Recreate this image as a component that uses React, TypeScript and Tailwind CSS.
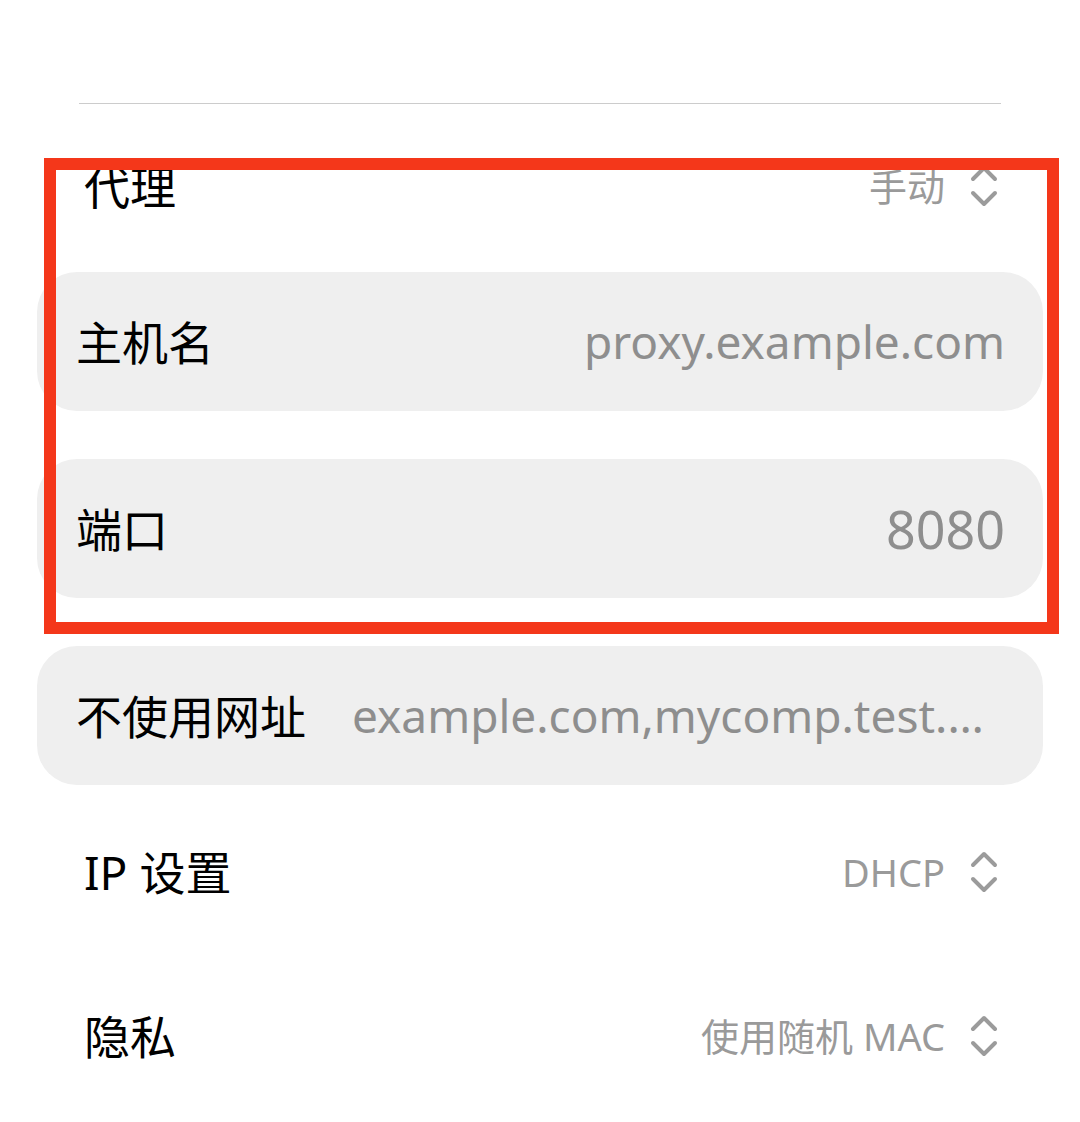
import React from "react";

const FONT = {
  fontFamily: '"Noto Sans", "Noto Sans CJK SC", sans-serif',
};

function UpDown() {
  return (
    <svg width="28" height="42" viewBox="0 0 28 42" fill="none" className="shrink-0">
      <path d="M3 14 L14 3 L25 14" stroke="#9b9b9b" strokeWidth="4" strokeLinecap="round" strokeLinejoin="round" />
      <path d="M3 28 L14 39 L25 28" stroke="#9b9b9b" strokeWidth="4" strokeLinecap="round" strokeLinejoin="round" />
    </svg>
  );
}

function SelectRow({ label, value }: { label: string; value: string }) {
  return (
    <div className="h-[164px] flex items-center justify-between pl-[84px] pr-[82px]">
      <span className="text-[46px] leading-none text-black">{label}</span>
      <div className="flex items-center gap-[25px]">
        <span className="text-[38px] leading-none text-[#9a9a9a]">{value}</span>
        <UpDown />
      </div>
    </div>
  );
}

function InputBox({ label, value, big }: { label: string; value: string; big?: boolean }) {
  return (
    <div className="h-[139px] rounded-[40px] bg-[#efefef] flex items-center gap-[46px] pl-[39px] pr-[38px]">
      <span className="shrink-0 text-[46px] leading-none text-black">{label}</span>
      <span
        className={
          big
            ? "min-w-0 flex-1 truncate text-right text-[52px] leading-[1.3] text-[#8e8e8e]"
            : "min-w-0 flex-1 truncate text-right text-[46px] leading-[1.3] text-[#8e8e8e]"
        }
      >
        {value}
      </span>
    </div>
  );
}

export default function App() {
  return (
    <div className="relative w-[1080px] h-[1122px] overflow-hidden bg-white" style={FONT}>
      <div className="h-[103px] flex items-start">
        <span className="ml-[113px] -mt-[31px] text-[36px] leading-none text-[#a0a0a0]">Do not validate</span>
        <span className="ml-[185px] -mt-[31px] text-[36px] leading-none text-[#a0a0a0]">None</span>
      </div>
      <div className="mx-[79px] h-px bg-[#cccccc]" />
      <SelectRow label="代理" value="手动" />
      <div className="flex flex-col gap-12 px-[37px] pt-1 pb-[5px]">
        <InputBox label="主机名" value="proxy.example.com" />
        <InputBox label="端口" value="8080" big />
        <InputBox label="不使用网址" value="example.com,mycomp.test.com" />
      </div>
      <SelectRow label="IP 设置" value="DHCP" />
      <SelectRow label="隐私" value="使用随机 MAC" />

      <div className="absolute left-[44px] top-[158px] w-[1015px] h-[476px] border-[12px] border-[#f4371a] pointer-events-none" />
    </div>
  );
}
